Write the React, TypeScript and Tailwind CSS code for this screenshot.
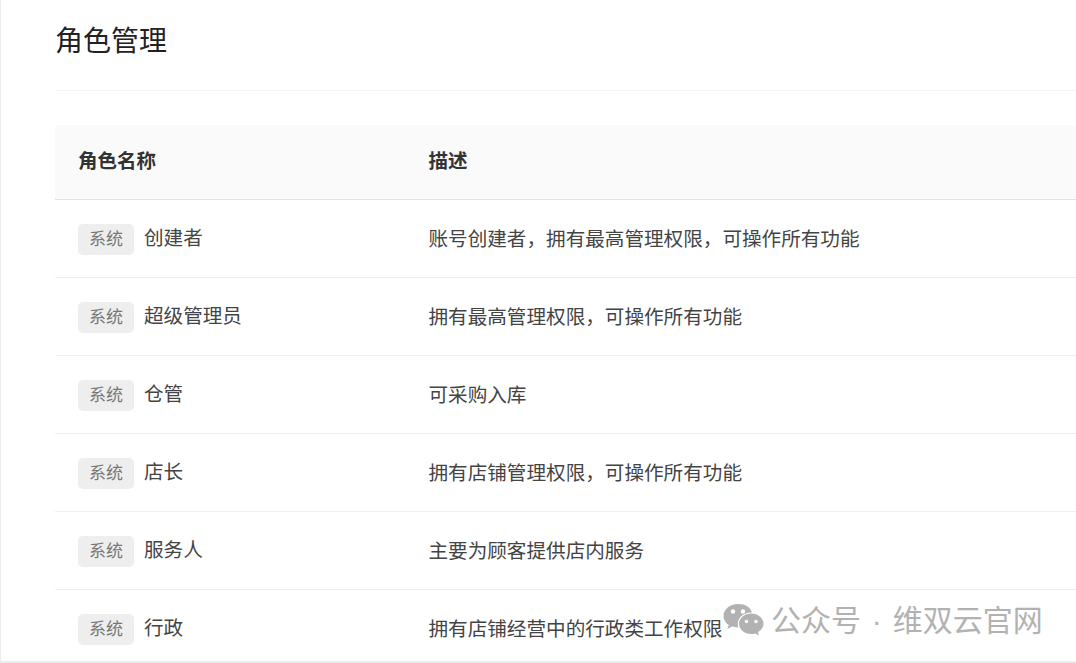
const rows = [
  ["创建者", "账号创建者，拥有最高管理权限，可操作所有功能"],
  ["超级管理员", "拥有最高管理权限，可操作所有功能"],
  ["仓管", "可采购入库"],
  ["店长", "拥有店铺管理权限，可操作所有功能"],
  ["服务人", "主要为顾客提供店内服务"],
  ["行政", "拥有店铺经营中的行政类工作权限"],
];

const font = { fontFamily: '"Liberation Sans", "Noto Sans CJK SC", sans-serif' };

export default function App() {
  return (
    <div style={font} className="relative h-[663px] w-[1076px] overflow-hidden bg-white">
      <div className="flex h-[663px] flex-col overflow-hidden border-b-2 border-l border-[#e8eef0] pl-[54px]">
        <div className="flex h-[91px] shrink-0 items-start border-b border-[#f2f3f5] pt-[23px]">
          <h1 className="text-[28px] leading-[37px] font-normal text-[#222]">角色管理</h1>
        </div>
        <div className="mt-[34px] flex h-[75px] shrink-0 items-center rounded-t-[3px] border-b border-[#e3e3e3] bg-[#fafafa] text-[19.5px] font-bold text-[#333]">
          <div className="w-[373.500px] pl-[23px]">角色名称</div>
          <div>描述</div>
        </div>
        {rows.map(([name, desc]) => (
          <div key={name} className="flex h-[78px] shrink-0 items-center border-b border-[#f0f0f0] text-[19.6px] text-[#444]">
            <div className="flex w-[373.500px] items-center pl-[23px]">
              <span className="mt-[2px] flex h-[31px] w-[56px] items-center justify-center rounded-[5px] bg-[#eeeeee] text-[17px] text-[#777]">系统</span>
              <span className="ml-[10px] text-[#444]">{name}</span>
            </div>
            <div className="mt-[2px] text-[#444]">{desc}</div>
          </div>
        ))}
      </div>
      <div className="absolute left-[723px] top-[602px] flex items-center">
        <svg width="41" height="36" viewBox="0 0 41 36" fill="#b2b2b2">
          <path d="M15 1C7 1 0.5 6.2 0.5 13c0 3.8 2 6.8 5.2 9L4.5 26l4.6-2.4c1.8.5 3.6.8 5.4.8h.9c-.4-1.200-.6-2.400-.6-3.700 0-6.300 5.900-11.300 13.200-11.300h1C27.800 4.500 22 1 15 1z" />
          <path d="M40.500 20.700C40.500 15 34.900 10.500 28.200 10.500S16 15 16 20.700 21.500 31 28.200 31c1.400 0 2.800-.2 4.100-.6l3.700 2-1-3.300c3.200-2.100 5.500-5 5.500-8.400z" />
          <circle cx="10" cy="8.500" r="2.200" fill="#fff" />
          <circle cx="20" cy="8.500" r="2.200" fill="#fff" />
          <circle cx="23.500" cy="18.500" r="1.800" fill="#fff" />
          <circle cx="33" cy="18.500" r="1.800" fill="#fff" />
        </svg>
        <span className="ml-[7px] text-[30px] leading-[38px] [word-spacing:2.5px] whitespace-nowrap text-[#b2b2b2]">公众号 · 维双云官网</span>
      </div>
    </div>
  );
}
